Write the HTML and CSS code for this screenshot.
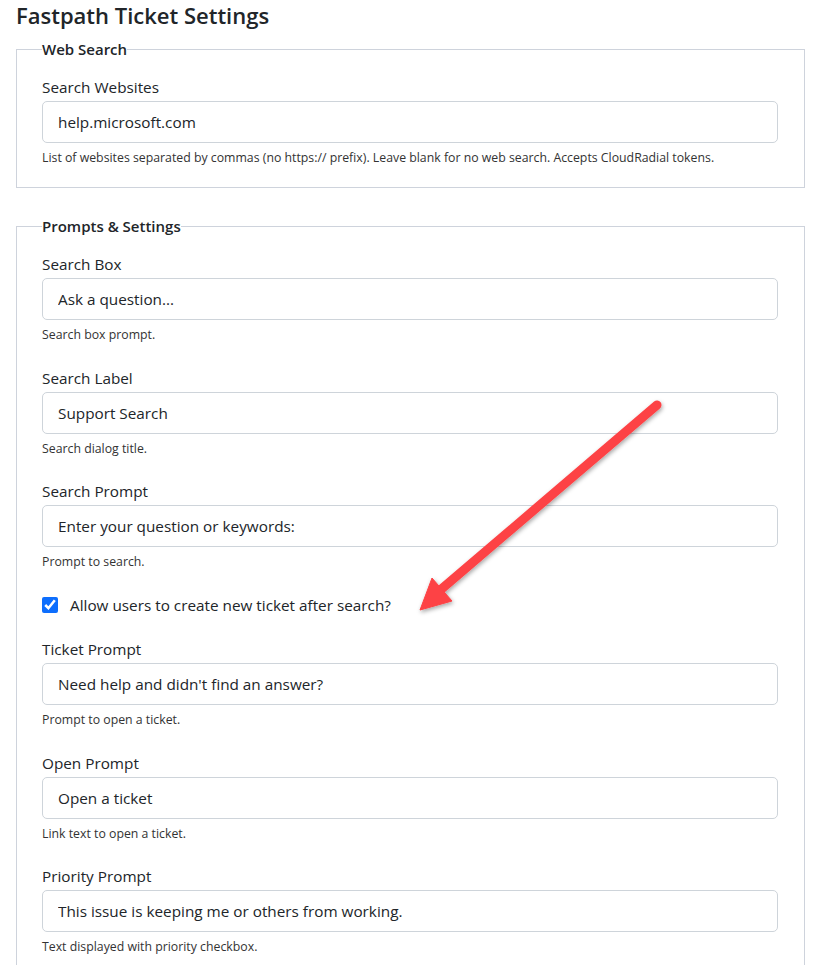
FILE: index.html
```html
<!DOCTYPE html>
<html lang="en">
<head>
    <meta charset="UTF-8">
    <meta name="viewport" content="width=device-width, initial-scale=1.0">
    <title>Fastpath Ticket Settings</title>
    <link rel="stylesheet" href="styles.css">
</head>
<body>
    <h1 class="page-title">Fastpath Ticket Settings</h1>

    <fieldset class="section">
        <legend>Web Search</legend>
        <div class="field">
            <label for="websites">Search Websites</label>
            <input type="text" id="websites" value="help.microsoft.com">
            <p class="hint">List of websites separated by commas (no https:// prefix). Leave blank for no web search. Accepts CloudRadial tokens.</p>
        </div>
    </fieldset>

    <fieldset class="section">
        <legend>Prompts &amp; Settings</legend>
        <div class="field">
            <label for="search_box">Search Box</label>
            <input type="text" id="search_box" value="Ask a question...">
            <p class="hint">Search box prompt.</p>
        </div>
        <div class="field">
            <label for="search_label">Search Label</label>
            <input type="text" id="search_label" value="Support Search">
            <p class="hint">Search dialog title.</p>
        </div>
        <div class="field">
            <label for="search_prompt">Search Prompt</label>
            <input type="text" id="search_prompt" value="Enter your question or keywords:">
            <p class="hint">Prompt to search.</p>
        </div>
        <div class="check-row">
            <input type="checkbox" id="allow_ticket" checked>
            <label for="allow_ticket">Allow users to create new ticket after search?</label>
        </div>
        <div class="field">
            <label for="ticket_prompt">Ticket Prompt</label>
            <input type="text" id="ticket_prompt" value="Need help and didn't find an answer?">
            <p class="hint">Prompt to open a ticket.</p>
        </div>
        <div class="field">
            <label for="open_prompt">Open Prompt</label>
            <input type="text" id="open_prompt" value="Open a ticket">
            <p class="hint">Link text to open a ticket.</p>
        </div>
        <div class="field">
            <label for="priority_prompt">Priority Prompt</label>
            <input type="text" id="priority_prompt" value="This issue is keeping me or others from working.">
            <p class="hint">Text displayed with priority checkbox.</p>
        </div>
    </fieldset>

    <!-- annotation arrow pointing at the checkbox -->
    <svg class="callout" width="817" height="965" viewBox="0 0 817 965">
        <defs>
            <filter id="shadow" x="-20%" y="-20%" width="140%" height="140%">
                <feDropShadow dx="1" dy="2" stdDeviation="2" flood-color="#000" flood-opacity="0.35"/>
            </filter>
        </defs>
        <g filter="url(#shadow)" fill="#fd4245" stroke="#fd4245">
            <line x1="657" y1="405" x2="438" y2="592" stroke-width="9" stroke-linecap="round"/>
            <polygon points="420,610 432,578 452,601" stroke-width="1" stroke-linejoin="round"/>
        </g>
    </svg>
</body>
</html>
```

FILE: styles.css
```css
body {
    margin: 0;
    padding: 0 12px 0 16px;
    font-family: "Open Sans", "Noto Sans", sans-serif;
    color: #212529;
    background: #fff;
}
.page-title {
    margin: 0 0 7px;
    font-size: 22px;
    font-weight: 600;
    line-height: 30px;
}
.section {
    margin: 0 0 26px;
    padding: 0 26px 0 25px;
    border: 1px solid #ced3dc;
}
.section legend {
    padding: 0;
    font-size: 15px;
    font-weight: 600;
    line-height: 24px;
}
.field {
    margin-top: 14px;
    margin-bottom: 20px;
}
.field label {
    display: block;
    margin-bottom: 2px;
    font-size: 15.3px;
    line-height: 24px;
}
.field input {
    display: block;
    box-sizing: border-box;
    width: 100%;
    height: 42px;
    padding: 8px 15px;
    border: 1px solid #ced4da;
    border-radius: 5px;
    font-family: inherit;
    font-size: 15.3px;
    color: #212529;
}
.hint {
    margin: 5px 0 0;
    font-size: 12.3px;
    line-height: 19px;
    color: #333;
}
.field + .field {
    margin-top: 21.5px;
}
.check-row {
    display: flex;
    align-items: center;
    gap: 12px;
    margin: 22px 0 0;
    font-size: 15.3px;
    line-height: 24px;
}
.check-row + .field {
    margin-top: 20px;
}
.check-row input {
    width: 16px;
    height: 16px;
    margin: 0;
    accent-color: #0d6efd;
}
.callout {
    position: absolute;
    top: 0;
    left: 0;
    pointer-events: none;
}
```
